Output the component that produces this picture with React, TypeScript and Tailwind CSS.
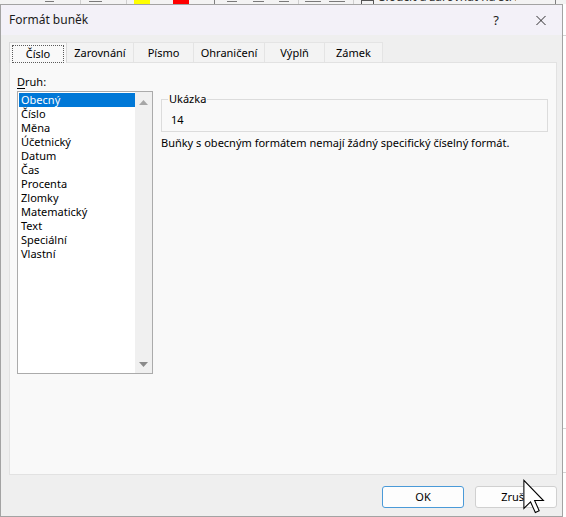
import React from 'react';

const kinds = [
  'Obecný',
  'Číslo',
  'Měna',
  'Účetnický',
  'Datum',
  'Čas',
  'Procenta',
  'Zlomky',
  'Matematický',
  'Text',
  'Speciální',
  'Vlastní',
];

// strip of the spreadsheet ribbon peeking out above the dialog
function RibbonStrip() {
  return (
    <div className="flex h-[4px] shrink-0 overflow-hidden bg-[#f3f3f3]">
      <div className="w-[45px] shrink-0" />
      <div className="mt-[1px] h-px w-[9px] shrink-0 bg-[#7a7a7a]" />
      <div className="w-[26px] shrink-0" />
      <div className="w-px shrink-0 bg-[#cfcfcf]" />
      <div className="w-[8px] shrink-0" />
      <div className="mt-[1px] h-px w-[13px] shrink-0 bg-[#7a7a7a]" />
      <div className="w-[24px] shrink-0" />
      <div className="w-px shrink-0 bg-[#cfcfcf]" />
      <div className="w-[7px] shrink-0" />
      <div className="w-[16px] shrink-0 bg-[#ffff00]" />
      <div className="w-[23px] shrink-0" />
      <div className="w-[16px] shrink-0 bg-[#ff0000]" />
      <div className="w-[25px] shrink-0" />
      <div className="w-px shrink-0 bg-[#7f7f7f]" />
      <div className="w-[12px] shrink-0" />
      <div className="mt-[1px] h-px w-[10px] shrink-0 bg-[#7a7a7a]" />
      <div className="w-[16px] shrink-0" />
      <div className="mt-[1px] h-px w-[11px] shrink-0 bg-[#7a7a7a]" />
      <div className="w-[15px] shrink-0" />
      <div className="mt-[1px] h-px w-[10px] shrink-0 bg-[#7a7a7a]" />
      <div className="w-[9px] shrink-0" />
      <div className="w-px shrink-0 bg-[#cfcfcf]" />
      <div className="w-[6px] shrink-0" />
      <div className="mt-[1px] h-px w-[16px] shrink-0 bg-[#7a7a7a]" />
      <div className="w-[8px] shrink-0" />
      <div className="mt-[1px] h-px w-[16px] shrink-0 bg-[#7a7a7a]" />
      <div className="w-[8px] shrink-0" />
      <div className="w-px shrink-0 bg-[#cfcfcf]" />
      <div className="w-[7px] shrink-0" />
      <div className="h-[6px] w-[13px] shrink-0 border border-[#555]" />
      <div className="w-[5px] shrink-0" />
      <div className="w-[137px] shrink-0 overflow-hidden">
        <div className="-mt-[10px] whitespace-nowrap text-[12px] leading-[14px] text-[#333]">
          Sloučit a zarovnat na střed
        </div>
      </div>
      <div className="w-[39px] shrink-0" />
      <div className="w-px shrink-0 bg-[#7f7f7f]" />
    </div>
  );
}

function Tab({ label, width, active }: { label: string; width: string; active?: boolean }) {
  if (active) {
    return (
      <div
        className={`${width} relative z-10 -mb-px flex h-[21px] shrink-0 items-start border border-b-0 border-[#d9d9d9] bg-[#f9f9f9] px-[2px] pt-[2px]`}
      >
        <div className="flex h-[18px] flex-1 items-center justify-center border border-dotted border-[#5a5a5a]">
          {label}
        </div>
      </div>
    );
  }
  return (
    <div
      className={`${width} flex h-[20px] shrink-0 items-center justify-center border-r border-t border-[#e4e4e4] bg-[#f3f3f3] pt-[1px]`}
    >
      {label}
    </div>
  );
}

function ScrollArrow({ down }: { down?: boolean }) {
  return (
    <svg width="9" height="5" viewBox="0 0 9 5">
      {down ? (
        <path d="M0 0 L9 0 L4.5 5 Z" fill="#8a8a8a" />
      ) : (
        <path d="M0 5 L9 5 L4.5 0 Z" fill="#a6a6a6" />
      )}
    </svg>
  );
}

export default function App() {
  return (
    <div className="relative flex h-[517px] w-[566px] flex-col overflow-hidden bg-white font-['Noto_Sans','Open_Sans',sans-serif] text-[11px] leading-[14px] text-black">
      <RibbonStrip />

      <div className="flex flex-1">
        {/* dialog */}
        <div className="flex w-[563px] shrink-0 flex-col border border-[#a3a3a3]">
          {/* title bar */}
          <div className="flex h-[30px] shrink-0 items-center bg-[#f3f1f8] pl-[8px] text-[12px] text-[#1b1b1b]">
            <span>Formát buněk</span>
            <span className="ml-auto text-[13px]">?</span>
            <div className="ml-[37px] mr-[16px] flex h-[10px] w-[10px] items-center justify-center">
              <svg width="11" height="11" viewBox="0 0 11 11">
                <path d="M0.5 0.5 L10.5 10.5 M10.5 0.5 L0.5 10.5" stroke="#1b1b1b" strokeWidth="1" />
              </svg>
            </div>
          </div>

          {/* body */}
          <div className="flex flex-1 flex-col bg-[#efefef] pl-[8px] pr-[5px] pt-[7px]">
            {/* tabs */}
            <div className="flex items-end">
              <Tab label="Číslo" width="w-[58px]" active />
              <Tab label="Zarovnání" width="w-[67px]" />
              <Tab label="Písmo" width="w-[60px]" />
              <Tab label="Ohraničení" width="w-[71px]" />
              <Tab label="Výplň" width="w-[60px]" />
              <Tab label="Zámek" width="w-[58px]" />
            </div>

            {/* panel */}
            <div className="flex h-[413px] flex-col border border-[#e2e2e2] bg-[#f9f9f9] pl-[7px] pt-[12px]">
              <div className="h-[14px]">
                <span className="underline underline-offset-2">D</span>ruh:
              </div>

              <div className="mt-[2px] flex">
                {/* list box */}
                <div className="flex h-[283px] w-[136px] border border-[#ababab] bg-white">
                  <div className="flex-1 pl-px pt-px">
                    {kinds.map((k, i) => (
                      <div
                        key={k}
                        className={
                          i === 0
                            ? 'h-[14px] bg-[#0078d7] pl-[2px] text-white'
                            : 'h-[14px] pl-[2px]'
                        }
                      >
                        {k}
                      </div>
                    ))}
                  </div>
                  <div className="flex w-[17px] flex-col items-center justify-between bg-[#f0f0f0] pb-[6px] pt-[8px]">
                    <ScrollArrow />
                    <ScrollArrow down />
                  </div>
                </div>

                {/* right column */}
                <div className="ml-[8px] mt-px flex w-[387px] flex-col">
                  <fieldset className="h-[40px] border border-[#dcdcdc] px-[6px] pb-[3px]">
                    <legend className="px-px leading-[14px]">Ukázka</legend>
                    <div className="mt-[7px] pl-[3px]">14</div>
                  </fieldset>
                  <p className="mt-[4px]">
                    Buňky s obecným formátem nemají žádný specifický číselný formát.
                  </p>
                </div>
              </div>
            </div>

            {/* buttons */}
            <div className="mt-[11px] flex justify-end gap-[11px]">
              <button className="h-[22px] w-[82px] rounded-[3px] border border-[#4a9ad8] bg-[#fdfdfd] text-[11px]">
                OK
              </button>
              <button className="h-[22px] w-[82px] rounded-[3px] border border-[#d0d0d0] bg-[#fdfdfd] text-[11px]">
                Zrušit
              </button>
            </div>
          </div>
        </div>

        {/* spreadsheet behind, on the right */}
        <div className="flex flex-1 flex-col bg-white">
          <div className="h-[31px]" />
          <div className="h-px bg-[#d4d4d4]" />
          <div className="h-[392px]" />
          <div className="h-px bg-[#d4d4d4]" />
          <div className="h-[43px]" />
          <div className="h-px bg-[#d4d4d4]" />
        </div>
      </div>

      {/* mouse pointer over the cancel button */}
      <svg
        className="pointer-events-none absolute left-[523px] top-[479px]"
        width="22"
        height="36"
        viewBox="0 0 12.5 20"
      >
        <path
          d="M0.5 0.5 L0.5 16.5 L4.3 12.8 L7 18.8 L9.2 17.8 L6.6 12 L11.6 12 Z"
          fill="white"
          stroke="black"
          strokeWidth="0.6"
          strokeLinejoin="miter"
        />
      </svg>
    </div>
  );
}
